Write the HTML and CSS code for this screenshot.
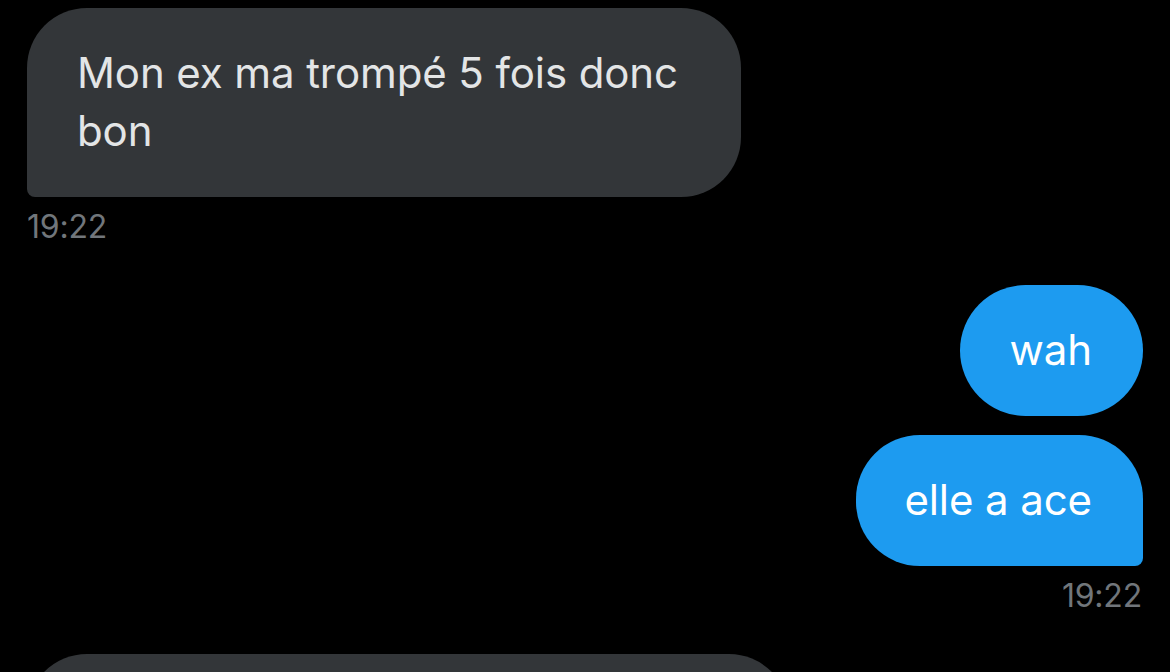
FILE: index.html
```html
<!DOCTYPE html>
<html lang="fr">
<head>
<meta charset="utf-8">
<title>Messages</title>
<link rel="stylesheet" href="styles.css">
</head>
<body>
<div class="viewport">
  <div class="thread">
    <div class="group in">
      <div class="bubble recv wide">Mon ex ma trompé 5 fois donc bon</div>
      <div class="time">19:22</div>
    </div>
    <div class="group out">
      <div class="bubble sent first">wah</div>
      <div class="bubble sent last">elle a ace</div>
      <div class="time">19:22</div>
    </div>
    <div class="group in">
      <div class="bubble recv next">&nbsp;</div>
    </div>
  </div>
</div>
</body>
</html>
```
FILE: styles.css
```css
* { box-sizing: border-box; }
html, body {
  margin: 0;
  padding: 0;
  background: #000;
}
body {
  font-family: Inter, "Liberation Sans", sans-serif;
  -webkit-font-smoothing: antialiased;
}
.viewport {
  height: 100vh;
  overflow: hidden;
}
.thread {
  display: flex;
  flex-direction: column;
  padding: 8px 27px 0 27px;
  gap: 40px;
}
.group {
  display: flex;
  flex-direction: column;
  gap: 19px;
}
.group.in { align-items: flex-start; }
.group.out { align-items: flex-end; }
.bubble {
  font-size: 42px;
  line-height: 58px;
  padding: 36px 51px 37px 50px;
  letter-spacing: -0.1px;
}
.recv {
  background: #333639;
  color: #e3e5e6;
  border-radius: 60px 60px 60px 8px;
}
.sent {
  background: #1d9bf0;
  color: #ffffff;
  border-radius: 64px 64px 8px 64px;
}
.sent.first { border-radius: 66px; }
.sent.last { padding-left: 48px; }
.wide { width: 714px; }
.next { width: 762px; height: 200px; }
.time {
  font-size: 32px;
  line-height: 36px;
  color: #71767b;
  margin-top: -7px;
  letter-spacing: -0.2px;
}
.out .time { margin-right: 1px; }
```
